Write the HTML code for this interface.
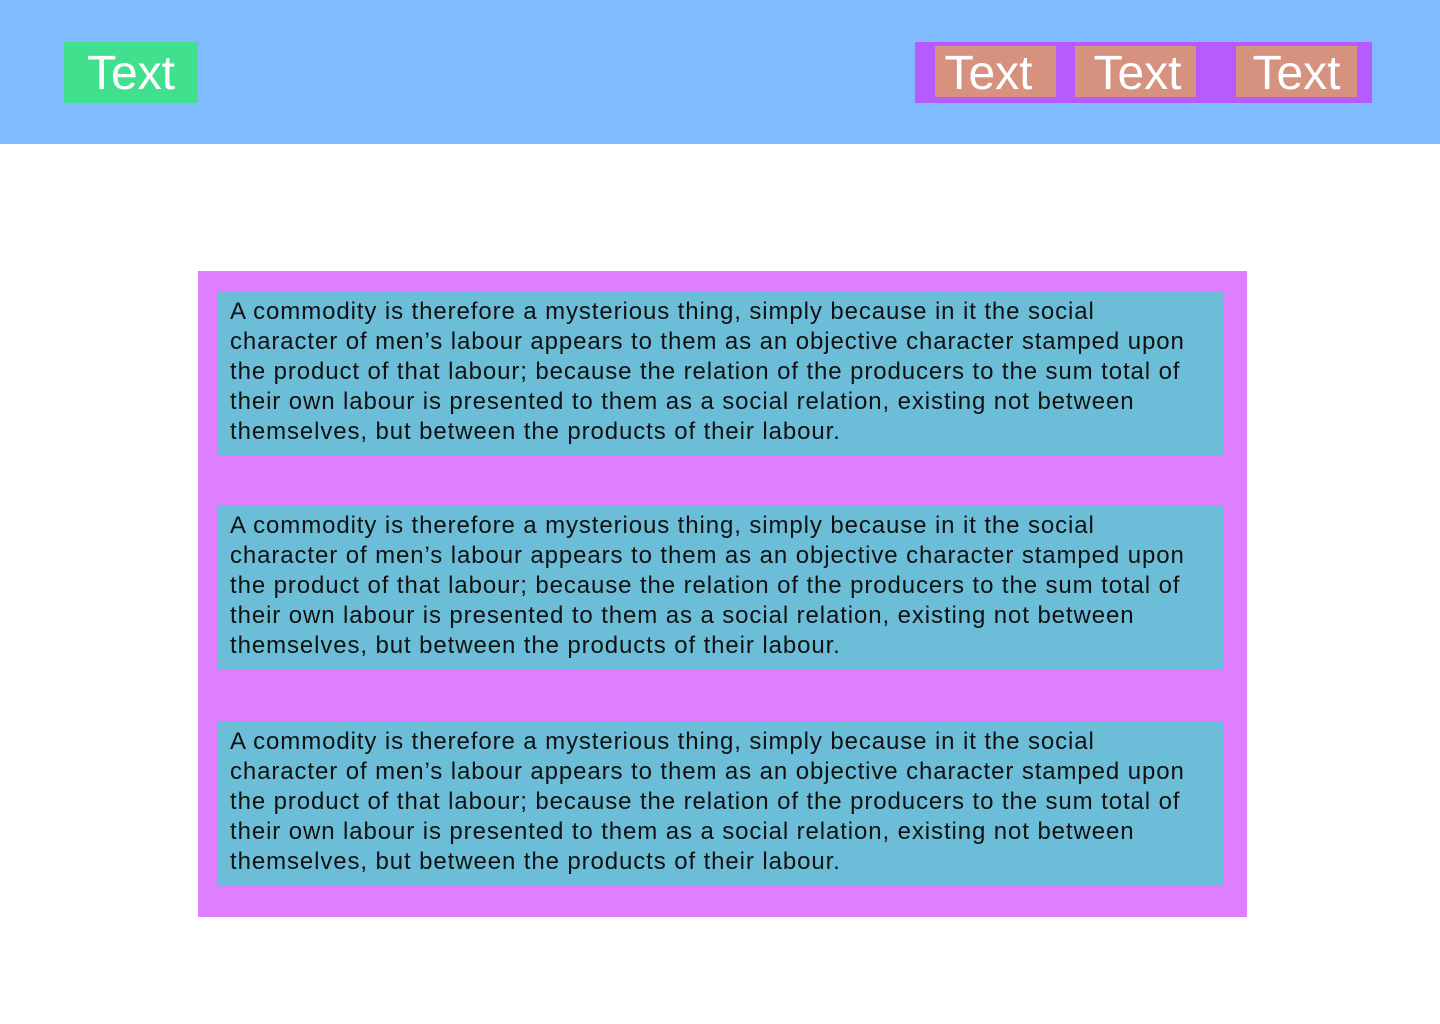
<!DOCTYPE html>
<html><head><meta charset="utf-8"><style>
*{margin:0;padding:0;box-sizing:border-box}
body{width:1440px;height:1024px;background:#fff;font-family:"Liberation Sans",sans-serif;position:relative;overflow:hidden}
.hdr{position:absolute;left:0;top:0;width:1440px;height:144px;background:#80bbff}
.logo{position:absolute;left:64px;top:42px;width:134px;height:61px;background:#41e08e;color:#fff;font-size:48px;line-height:64px;text-align:center}
.nav{position:absolute;left:915px;top:42px;width:457px;height:61px;background:#b65cff}
.it{position:absolute;top:4px;width:121px;height:51px;background:#d7917f;color:#fff;font-size:48px;line-height:56px;text-align:center;overflow:hidden}
.main{position:absolute;left:198px;top:271px;width:1049px;height:646px;background:#dd7fff}
.card{position:absolute;left:20px;width:1005px;height:163px;background:#6cbed8;padding:5px 12px;font-size:24px;letter-spacing:0.9px;line-height:30px;color:#111;white-space:nowrap;overflow:hidden}
</style></head><body>
<div class="hdr">
<div class="logo">Text</div>
<div class="nav">
<div class="it" style="left:20px;text-indent:-14px">Text</div>
<div class="it" style="left:160px;text-indent:4px">Text</div>
<div class="it" style="left:321px">Text</div>
</div>
</div>
<div class="main">
<div class="card" style="top:21px">A commodity is therefore a mysterious thing, simply because in it the social<br>character of men’s labour appears to them as an objective character stamped upon<br>the product of that labour; because the relation of the producers to the sum total of<br>their own labour is presented to them as a social relation, existing not between<br>themselves, but between the products of their labour.</div>
<div class="card" style="top:235px">A commodity is therefore a mysterious thing, simply because in it the social<br>character of men’s labour appears to them as an objective character stamped upon<br>the product of that labour; because the relation of the producers to the sum total of<br>their own labour is presented to them as a social relation, existing not between<br>themselves, but between the products of their labour.</div>
<div class="card" style="top:451px">A commodity is therefore a mysterious thing, simply because in it the social<br>character of men’s labour appears to them as an objective character stamped upon<br>the product of that labour; because the relation of the producers to the sum total of<br>their own labour is presented to them as a social relation, existing not between<br>themselves, but between the products of their labour.</div>
</div>
</body></html>
